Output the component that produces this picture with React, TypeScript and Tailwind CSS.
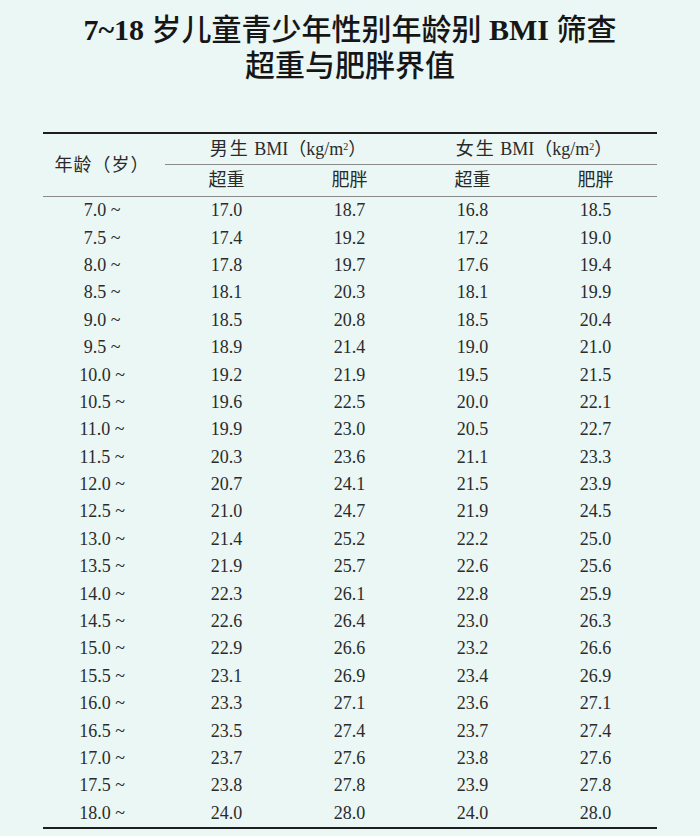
const rows: [string, string, string, string, string][] = [
  ['7.0 ~', '17.0', '18.7', '16.8', '18.5'],
  ['7.5 ~', '17.4', '19.2', '17.2', '19.0'],
  ['8.0 ~', '17.8', '19.7', '17.6', '19.4'],
  ['8.5 ~', '18.1', '20.3', '18.1', '19.9'],
  ['9.0 ~', '18.5', '20.8', '18.5', '20.4'],
  ['9.5 ~', '18.9', '21.4', '19.0', '21.0'],
  ['10.0 ~', '19.2', '21.9', '19.5', '21.5'],
  ['10.5 ~', '19.6', '22.5', '20.0', '22.1'],
  ['11.0 ~', '19.9', '23.0', '20.5', '22.7'],
  ['11.5 ~', '20.3', '23.6', '21.1', '23.3'],
  ['12.0 ~', '20.7', '24.1', '21.5', '23.9'],
  ['12.5 ~', '21.0', '24.7', '21.9', '24.5'],
  ['13.0 ~', '21.4', '25.2', '22.2', '25.0'],
  ['13.5 ~', '21.9', '25.7', '22.6', '25.6'],
  ['14.0 ~', '22.3', '26.1', '22.8', '25.9'],
  ['14.5 ~', '22.6', '26.4', '23.0', '26.3'],
  ['15.0 ~', '22.9', '26.6', '23.2', '26.6'],
  ['15.5 ~', '23.1', '26.9', '23.4', '26.9'],
  ['16.0 ~', '23.3', '27.1', '23.6', '27.1'],
  ['16.5 ~', '23.5', '27.4', '23.7', '27.4'],
  ['17.0 ~', '23.7', '27.6', '23.8', '27.6'],
  ['17.5 ~', '23.8', '27.8', '23.9', '27.8'],
  ['18.0 ~', '24.0', '28.0', '24.0', '28.0'],
];

export default function App() {
  return (
    <div className="w-[700px] min-h-[836px] bg-[#eaf7f5] pt-[12px] font-['Liberation_Serif','Noto_Sans_CJK_SC',serif] text-[#1e1e1e]">
      {/* Title: latin bold, CJK a little lighter */}
      <div className="text-center text-[30px] leading-[36px] text-[#161616]">
        <div>
          <span className="font-bold">7~18 </span>
          <span className="font-medium">岁儿童青少年性别年龄别</span>
          <span className="font-bold"> BMI </span>
          <span className="font-medium">筛查</span>
        </div>
        <div className="font-medium">超重与肥胖界值</div>
      </div>

      {/* Table */}
      <div className="mx-[43px] mt-[48px] border-t-2 border-b-2 border-[#1e1e1e]">
        {/* Header */}
        <div className="flex border-b border-[#8a8a8a]">
          <div className="w-[122px] flex items-center justify-center text-[18px] tracking-[1px] text-[#2a2a2a] pr-[4px]">
            年龄（岁）
          </div>
          <div className="flex-1">
            <div className="grid grid-cols-2 h-[31px] items-center border-b border-[#8a8a8a] text-[18px] text-[#2a2a2a]">
              <div className="text-center">
                <span className="tracking-[2px]">男生</span> BMI（kg/m<sup className="text-[10px]">2</sup>）
              </div>
              <div className="text-center">
                <span className="tracking-[2px]">女生</span> BMI（kg/m<sup className="text-[10px]">2</sup>）
              </div>
            </div>
            <div className="grid grid-cols-4 h-[31px] items-center text-[18px] text-[#2a2a2a]">
              <div className="text-center">超重</div>
              <div className="text-center">肥胖</div>
              <div className="text-center">超重</div>
              <div className="text-center">肥胖</div>
            </div>
          </div>
        </div>

        {/* Body */}
        {rows.map((r) => (
          <div
            key={r[0]}
            className="grid grid-cols-[122px_1fr_1fr_1fr_1fr] h-[27.4px] items-center text-[18px] text-[#2b2b2b]"
          >
            <div className="text-center pr-[4px]">{r[0]}</div>
            <div className="text-center">{r[1]}</div>
            <div className="text-center">{r[2]}</div>
            <div className="text-center">{r[3]}</div>
            <div className="text-center">{r[4]}</div>
          </div>
        ))}
      </div>
    </div>
  );
}
